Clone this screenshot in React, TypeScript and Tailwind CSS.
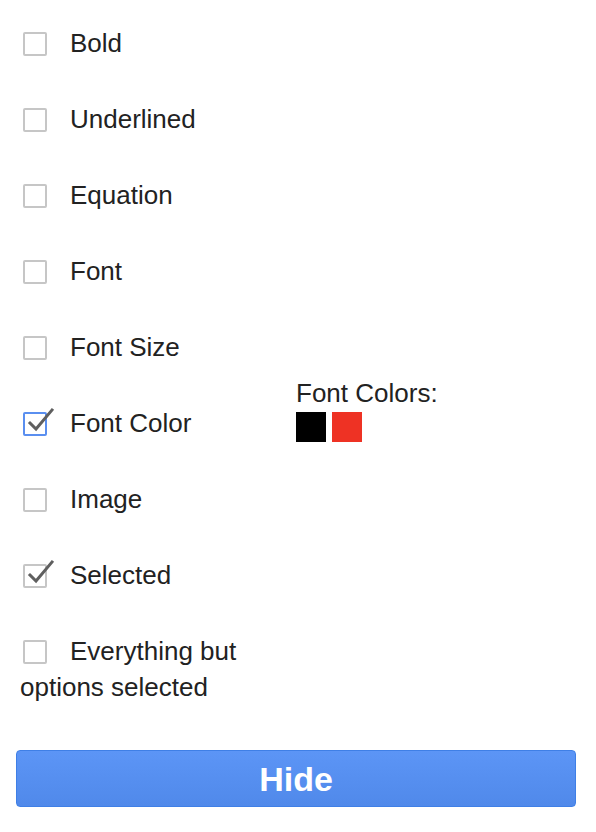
const options = [
  { label: 'Bold', checked: false },
  { label: 'Underlined', checked: false },
  { label: 'Equation', checked: false },
  { label: 'Font', checked: false },
  { label: 'Font Size', checked: false },
  { label: 'Font Color', checked: true, focused: true },
  { label: 'Image', checked: false },
  { label: 'Selected', checked: true },
  { label: 'Everything but options selected', checked: false },
];

const Box = ({ checked, focused }: { checked: boolean; focused?: boolean }) => (
  <span
    className={`relative inline-block w-6 h-6 align-[-4px] ml-[3px] mr-[23px] rounded-[2px] border-2 bg-white ${
      focused ? 'border-[#5a8ff0]' : 'border-[#c6c6c6]'
    }`}
  >
    {checked && (
      <svg className="absolute -top-[9px] left-[1px] w-[30px] h-[30px]" viewBox="0 0 30 30" fill="none">
        <path d="M4 18 L10 24 L26 5" stroke="#5f5f5f" strokeWidth="3" strokeLinecap="square" />
      </svg>
    )}
  </span>
);

export default function App() {
  return (
    <div className="w-[596px] h-[832px] bg-white text-[#222] font-['Liberation_Sans',Arial,sans-serif] px-5 pt-[25px]">
      <div className="flex">
        <div className="w-[256px] flex flex-col gap-10">
          {options.map((o) => (
            <div key={o.label} className="text-[26px] leading-[36px]">
              <Box checked={o.checked} focused={o.focused} />
              {o.label}
            </div>
          ))}
        </div>
        <div className="ml-5 mt-[350px] text-[26px] leading-[36px]">
          <div>Font Colors:</div>
          <div className="flex gap-[6px] mt-px">
            <span className="w-[30px] h-[30px] bg-black" />
            <span className="w-[30px] h-[30px] bg-[#ee3224]" />
          </div>
        </div>
      </div>
      <button className="mt-[45px] -ml-1 w-[560px] h-[57px] rounded-[4px] border border-[#3f7fe6] bg-gradient-to-b from-[#5c95f6] to-[#5089ea] text-white font-bold text-[34px] leading-none">
        Hide
      </button>
    </div>
  );
}
